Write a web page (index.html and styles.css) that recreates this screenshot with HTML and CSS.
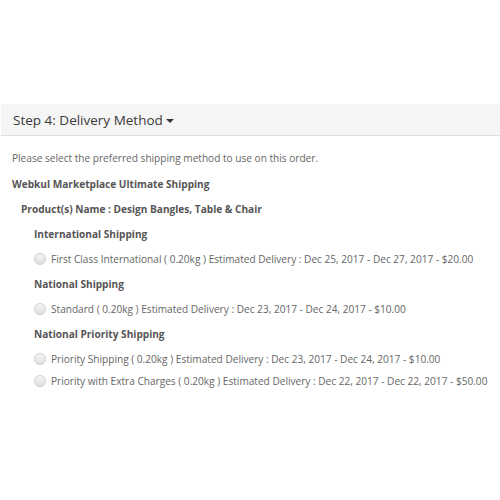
FILE: index.html
```html
<!DOCTYPE html>
<html lang="en">
<head>
    <meta charset="UTF-8">
    <title>Delivery Method</title>
    <link rel="stylesheet" href="styles.css">
</head>
<body>
    <div class="panel">
        <div class="panel-heading">
            <h4>Step 4: Delivery Method <span class="caret"></span></h4>
        </div>
        <div class="panel-body">
            <p class="intro">Please select the preferred shipping method to use on this order.</p>
            <p class="title">Webkul Marketplace Ultimate Shipping</p>
            <p class="product">Product(s) Name : Design Bangles, Table &amp; Chair</p>
            <div class="group">
                <p class="group-title">International Shipping</p>
                <label class="option"><input type="radio" name="shipping"> First Class International ( 0.20kg ) Estimated Delivery : Dec 25, 2017 - Dec 27, 2017 - $20.00</label>
                <p class="group-title">National Shipping</p>
                <label class="option"><input type="radio" name="shipping"> Standard ( 0.20kg ) Estimated Delivery : Dec 23, 2017 - Dec 24, 2017 - $10.00</label>
                <p class="group-title">National Priority Shipping</p>
                <label class="option"><input type="radio" name="shipping"> Priority Shipping ( 0.20kg ) Estimated Delivery : Dec 23, 2017 - Dec 24, 2017 - $10.00</label>
                <label class="option tight"><input type="radio" name="shipping"> Priority with Extra Charges ( 0.20kg ) Estimated Delivery : Dec 22, 2017 - Dec 22, 2017 - $50.00</label>
            </div>
        </div>
    </div>
</body>
</html>
```

FILE: styles.css
```css
body {
    margin: 0;
    padding-top: 104px;
    font-family: 'Open Sans', sans-serif;
    font-size: 10.1px;
    color: #666;
    background: #fff;
}
.panel {
    margin: 0 0 0 1px;
}
.panel-heading {
    background-color: #f5f5f5;
    border-bottom: 1px solid #ddd;
    border-top-left-radius: 3px;
    padding: 0 12px;
    height: 31px;
    display: flex;
    align-items: center;
}
.panel-heading h4 {
    margin: 0;
    font-size: 13.5px;
    font-weight: 400;
    color: #3a3a3a;
}
.caret {
    display: inline-block;
    width: 0;
    height: 0;
    margin-left: 0;
    vertical-align: middle;
    border-top: 4px solid #333;
    border-left: 4px solid transparent;
    border-right: 4px solid transparent;
}
.panel-body {
    padding: 14px 11px;
}
p {
    margin: 0;
}
.intro {
    line-height: 16px;
    margin-bottom: 10px;
}
.title, .product, .group-title {
    font-weight: 700;
    color: #555;
    line-height: 16px;
    margin-bottom: 9px;
}
.product {
    padding-left: 9px;
}
.group {
    padding-left: 22px;
}
.option {
    display: flex;
    align-items: center;
    line-height: 16px;
    margin-bottom: 9px;
    white-space: nowrap;
}
.option.tight {
    margin-top: -3px;
}
.option input {
    appearance: none;
    -webkit-appearance: none;
    margin: 0 5px 0 0;
    width: 12px;
    height: 12px;
    border-radius: 50%;
    border: 1px solid #cfcfcf;
    background: linear-gradient(#f4f4f4, #e0e0e0);
    box-sizing: border-box;
}
```
